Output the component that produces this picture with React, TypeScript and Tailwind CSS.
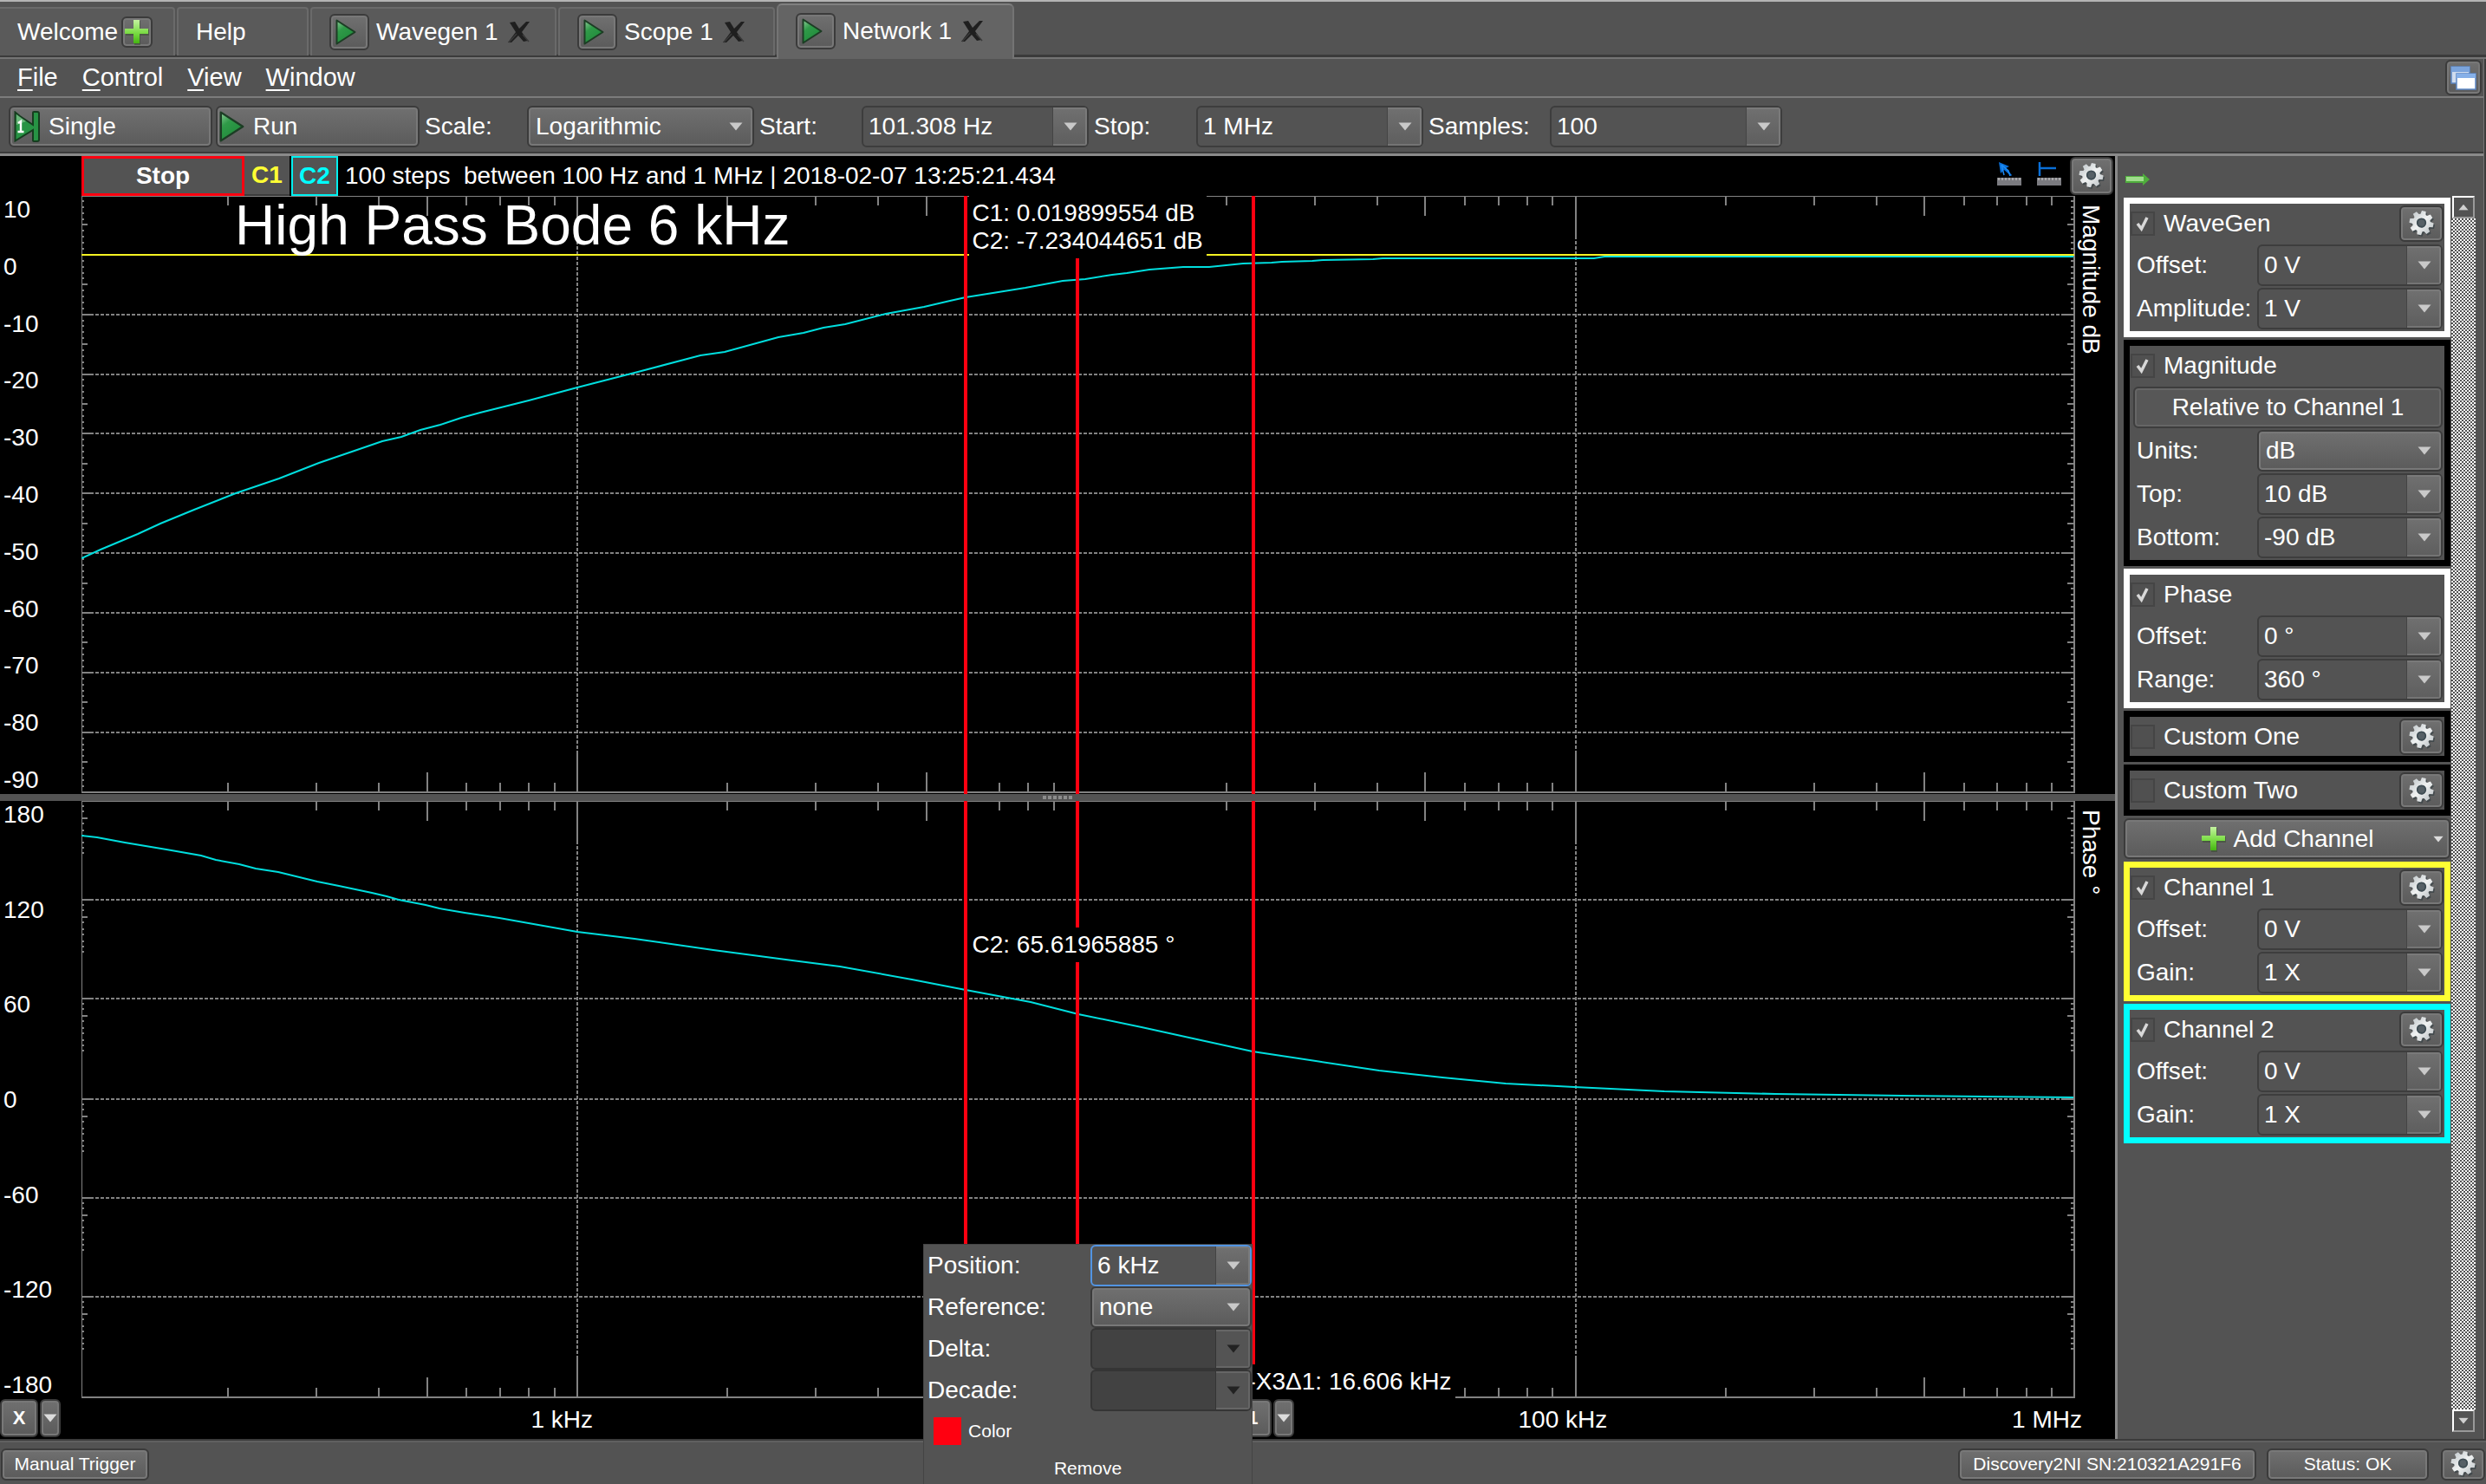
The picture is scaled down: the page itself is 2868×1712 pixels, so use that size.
import React, { useId } from "react";

/* ---------- shared looks ---------- */

const raised =
  "rounded-md border-2 border-[#3b3b3b] bg-linear-to-b from-[#707070] to-[#5b5b5b] shadow-[inset_0_0_0_2px_#787878]";

/* ---------- icons ---------- */

function PlayIcon({ className }: { className: string }) {
  return (
    <svg viewBox="0 0 24 32" preserveAspectRatio="none" className={className} aria-hidden="true">
      <defs>
        <linearGradient id="play" x1="0" y1="0" x2="0.6" y2="1">
          <stop offset="0" stopColor="#8fce9a" />
          <stop offset="0.4" stopColor="#2f9a48" />
          <stop offset="1" stopColor="#1f8a3a" />
        </linearGradient>
      </defs>
      <path d="M1.5 1.5 L22.5 16 L1.5 30.5 Z" fill="url(#play)" stroke="#1c3d24" strokeWidth="2" strokeLinejoin="round" />
    </svg>
  );
}

function SingleIcon() {
  return (
    <svg viewBox="0 0 30 36" className="h-9 w-[30px]" aria-hidden="true">
      <path
        d="M1.5 1.5 L7 6 L22 16 L22 2 Q22 1 23 1 H27 Q29 1 29 3 V33 Q29 35 27 35 H23 Q22 35 22 34 L22 22 L1.5 34.5 Z"
        fill="#279344"
        stroke="#163d1f"
        strokeWidth="2"
      />
      <path d="M3 4 L14 12 L3 16 Z" fill="#86c492" opacity="0.7" />
      <path d="M5 14 L8 12 V24 M4.5 24 H11.5" fill="none" stroke="#fff" strokeWidth="2.4" />
    </svg>
  );
}

function PlusIcon() {
  return (
    <svg viewBox="0 0 30 32" className="h-8 w-[30px]" aria-hidden="true">
      <defs>
        <linearGradient id="plus" x1="0" y1="0" x2="0" y2="1">
          <stop offset="0" stopColor="#c4f2a0" />
          <stop offset="0.55" stopColor="#7bdc45" />
          <stop offset="1" stopColor="#45b512" />
        </linearGradient>
      </defs>
      <path d="M12 3 H19 V13 H29 V20 H19 V31 H12 V20 H2 V13 H12 Z" fill="#2f4a22" opacity="0.45" />
      <path d="M11 2 H18 V12 H28 V18 H18 V29 H11 V18 H1 V12 H11 Z" fill="url(#plus)" />
    </svg>
  );
}

function CloseIcon() {
  return (
    <svg viewBox="0 0 28 26" className="h-[26px] w-7" aria-hidden="true">
      <path d="M3 2 L9 1 L14 9 L22 1 L26 1 L17 13 L24 23 L19 24 L13 17 L5 25 L1 25 L10 13 Z" fill="#1f1f1f" />
      <path d="M2 25 L11 15 M18 16 L25 24" stroke="#3a3a3a" strokeWidth="1.5" fill="none" />
    </svg>
  );
}

const gearPath = (() => {
  const points: string[] = [];
  const teeth = 8;
  for (let i = 0; i < teeth; i++) {
    const middle = (i * 2 * Math.PI) / teeth + 0.2;
    const corners: [number, number][] = [
      [-0.3, 11],
      [-0.17, 15],
      [0.17, 15],
      [0.3, 11],
    ];
    for (const [turn, radius] of corners) {
      points.push(`${(16 + radius * Math.cos(middle + turn)).toFixed(2)} ${(16 + radius * Math.sin(middle + turn)).toFixed(2)}`);
    }
  }
  return `M${points.join(" L")} Z M16 10.5 a5.5 5.5 0 1 0 0.01 0 Z`;
})();

function GearIcon() {
  return (
    <svg viewBox="0 0 33 34" className="h-8 w-8" aria-hidden="true">
      <defs>
        <linearGradient id="gear" x1="0" y1="0" x2="1" y2="1">
          <stop offset="0" stopColor="#b9c0c4" />
          <stop offset="0.5" stopColor="#f0f2f2" />
          <stop offset="1" stopColor="#b4bbbf" />
        </linearGradient>
      </defs>
      <path d={gearPath} transform="translate(1.5 2)" fill="#2f3a40" opacity="0.6" fillRule="evenodd" />
      <path d={gearPath} fill="url(#gear)" fillRule="evenodd" />
      <circle cx="16" cy="16" r="5" fill="#566066" stroke="#3f4d54" strokeWidth="2" />
    </svg>
  );
}

function WindowsIcon() {
  return (
    <svg viewBox="0 0 30 28" className="h-7 w-[30px]" aria-hidden="true">
      <rect x="1" y="1" width="21" height="19" fill="#cfdcee" stroke="#5c87c4" strokeWidth="1.5" />
      <rect x="1" y="1" width="21" height="6" fill="#7ba4dc" />
      <rect x="7" y="9" width="22" height="18" fill="#fff" stroke="#5c87c4" strokeWidth="1.5" />
      <rect x="7" y="9" width="22" height="5" fill="#86b0e8" />
    </svg>
  );
}

function RulerIcon({ mode }: { mode: "arrow" | "level" }) {
  return (
    <svg viewBox="0 0 28 28" className="h-7 w-7" aria-hidden="true">
      {mode === "arrow" ? (
        <>
          <path d="M2 0 L14 5 L10 7 L17 15 L16 16 L8 9 L4 13 Z" fill="#0a6fd8" />
          <path d="M5 3 L13 10 L15 16 M5 3 L8 15" stroke="#1d8cf5" strokeWidth="1.5" fill="none" />
        </>
      ) : (
        <path d="M3 0 V16 M3 7 H22" stroke="#0a6fd8" strokeWidth="2.5" fill="none" />
      )}
      <rect x="0" y="18" width="28" height="9" fill="#7b7b80" />
      <path d="M2 18 V21 M6 18 V21 M10 18 V21 M14 18 V21 M18 18 V21 M22 18 V21 M26 18 V21" stroke="#b8b8b8" strokeWidth="1.5" />
    </svg>
  );
}

function GreenArrowIcon() {
  return (
    <svg viewBox="0 0 30 16" className="h-4 w-[30px]" aria-hidden="true">
      <path d="M1 4 H21 V1 L29 8 L21 15 V12 H1 Z" fill="#4fae3c" />
      <path d="M2 5 H22 V10 H2 Z" fill="#9fdc8c" />
    </svg>
  );
}

function Chevron({ className = "fill-[#c9c9c9]" }: { className?: string }) {
  return (
    <svg viewBox="0 0 16 10" className={`h-[10px] w-4 ${className}`} aria-hidden="true">
      <path d="M0.5 0.5 H15.5 L8 9.5 Z" />
    </svg>
  );
}

/* ---------- controls ---------- */

function GearButton({ label, className = "h-[42px] w-[51px]" }: { label: string; className?: string }) {
  return (
    <button type="button" aria-label={label} className={`flex shrink-0 items-center justify-center ${raised} ${className}`}>
      <GearIcon />
    </button>
  );
}

function Combo({
  id,
  value,
  className,
  focused = false,
  disabled = false,
}: {
  id: string;
  value: string;
  className: string;
  focused?: boolean;
  disabled?: boolean;
}) {
  const frame = focused ? "border-[#5294e2] bg-[#535353]" : disabled ? "border-[#353535] bg-[#424242]" : "border-[#3d3d3d] bg-[#535353]";
  return (
    <div className={`flex h-12 shrink-0 overflow-hidden rounded-md border-2 ${frame} ${className}`}>
      <input id={id} defaultValue={value} disabled={disabled} className="min-w-0 flex-1 bg-transparent pl-1.5 text-[28px] leading-8 text-white outline-none" />
      <button
        type="button"
        aria-label="Choose a value"
        disabled={disabled}
        className={
          disabled
            ? "flex w-10 shrink-0 items-center justify-center border-l border-[#353535] bg-[#545454] shadow-[inset_-2px_0_0_#666,inset_0_2px_0_#666,inset_0_-2px_0_#666]"
            : "flex w-10 shrink-0 items-center justify-center border-l border-[#444] bg-linear-to-b from-[#707070] to-[#5e5e5e] shadow-[inset_-2px_0_0_#7a7a7a,inset_0_2px_0_#7a7a7a,inset_0_-2px_0_#747474]"
        }
      >
        <Chevron className={disabled ? "fill-[#222]" : "fill-[#c9c9c9]"} />
      </button>
    </div>
  );
}

function Select({ id, value, className }: { id: string; value: string; className: string }) {
  return (
    <div className={`relative h-12 shrink-0 ${className}`}>
      <select id={id} defaultValue={value} className={`h-full w-full appearance-none pl-2 text-[28px] leading-8 text-white ${raised}`}>
        <option>{value}</option>
      </select>
      <span className="pointer-events-none absolute inset-y-0 right-0 flex w-[42px] items-center justify-center">
        <Chevron />
      </span>
    </div>
  );
}

/* ---------- window tabs ---------- */

function ToolTab({ name, active = false, className }: { name: string; active?: boolean; className: string }) {
  return (
    <div
      className={`flex items-center ${
        active
          ? "h-16 rounded-t-md border-x-2 border-t-2 border-x-[#747474] border-t-[#808080] bg-[#646464] pb-0.5"
          : "h-14 rounded-t-sm border-x-2 border-t-2 border-x-[#6a6a6a] border-t-[#6a6a6a] bg-[#5a5a5a]"
      } ${className}`}
    >
      <button type="button" aria-label={`Run ${name}`} className={`flex h-[42px] w-[46px] items-center justify-center pr-2 ${raised}`}>
        <PlayIcon className="h-[30px] w-6" />
      </button>
      <span className="ml-2 whitespace-nowrap">{name}</span>
      <button type="button" aria-label={`Close ${name}`} className="ml-2.5">
        <CloseIcon />
      </button>
    </div>
  );
}

function Tabs() {
  return (
    <nav className="flex h-[68px] items-end gap-0.5 border-t-2 border-[#b4b4b4] bg-[#535353] shadow-[inset_0_-2px_0_#747474,inset_0_-5px_0_#3b3b3b]">
      <div className="mb-1 flex h-14 w-[202px] items-center gap-1 rounded-tr-sm border-t-2 border-r-2 border-[#6a6a6a] bg-[#5a5a5a] pl-5">
        <span>Welcome</span>
        <button type="button" aria-label="New instrument" className={`flex h-9 w-9 items-center justify-center ${raised}`}>
          <PlusIcon />
        </button>
      </div>
      <button type="button" className="mb-1 h-14 w-[152px] rounded-t-sm border-x-2 border-t-2 border-[#6a6a6a] bg-[#5a5a5a] pl-5 text-left">
        Help
      </button>
      <ToolTab name="Wavegen 1" className="mb-1 w-[284px] pl-5" />
      <ToolTab name="Scope 1" className="mb-1 w-[250px] pl-5" />
      <ToolTab name="Network 1" active className="w-[274px] pl-5" />
    </nav>
  );
}

function MenuBar() {
  return (
    <div className="flex h-[45px] items-center justify-between border-b-2 border-[#7c7c7c]">
      <div className="flex gap-7 pb-0.5 pl-5 text-[29px] leading-8">
        {["File", "Control", "View", "Window"].map((name) => (
          <button type="button" key={name}>
            <span className="underline decoration-2 underline-offset-4">{name[0]}</span>
            {name.slice(1)}
          </button>
        ))}
      </div>
      <button type="button" aria-label="Dock windows" className={`mr-0.5 flex h-[41px] w-[42px] items-center justify-center ${raised}`}>
        <WindowsIcon />
      </button>
    </div>
  );
}

function Toolbar() {
  return (
    <div className="flex h-[67px] items-center border-b-3 border-[#8a8a8a] pt-0.5 pl-2.5 shadow-[inset_0_-2px_0_#3b3b3b]">
      <button type="button" className={`flex h-12 w-[235px] items-center gap-2.5 pl-1 ${raised}`}>
        <SingleIcon />
        Single
      </button>
      <button type="button" className={`ml-1 flex h-12 w-[235px] items-center gap-2.5 pl-0.5 ${raised}`}>
        <PlayIcon className="h-9 w-[29px]" />
        Run
      </button>
      <label htmlFor="scale" className="w-[124px] pl-1.5">
        Scale:
      </label>
      <Select id="scale" value="Logarithmic" className="w-[262px]" />
      <label htmlFor="start" className="w-[124px] pl-1.5">
        Start:
      </label>
      <Combo id="start" value="101.308 Hz" className="w-[262px]" />
      <label htmlFor="stop" className="w-[124px] pl-1.5">
        Stop:
      </label>
      <Combo id="stop" value="1 MHz" className="w-[262px]" />
      <label htmlFor="samples" className="w-[146px] pl-1.5">
        Samples:
      </label>
      <Combo id="samples" value="100" className="w-[268px]" />
    </div>
  );
}

/* ---------- plots ---------- */

const WIDTH = 2300;
const HEIGHT = 690;

const freqX = (hz: number) => Math.round(572 + 575.9 * Math.log10(hz / 1000));

const minorFrequencies: { x: number; long: boolean }[] = [];
for (const decade of [100, 1000, 10000, 100000]) {
  for (let n = 2; n <= 9; n++) minorFrequencies.push({ x: freqX(n * decade), long: n === 5 });
}
const decades = [1000, 10000, 100000].map(freqX);
const cursors = [6000, 10060, 22606].map(freqX);

type Row = { y: number; size: "major" | "half" | "small" };

const magnitudeRows: Row[] = [];
for (let i = 1; i < 100; i++) {
  const y = Math.round(-1 + i * 6.886);
  magnitudeRows.push({ y, size: i % 10 === 0 ? "major" : i % 5 === 0 ? "half" : "small" });
}

const phaseRows: Row[] = [];
for (const base of [0, 114, 228, 344, 458, 572]) {
  if (base > 0) phaseRows.push({ y: base, size: "major" });
  for (const step of [6, 12, 20, 26, 34, 40, 48, 54, 60]) {
    phaseRows.push({ y: base + step, size: step === 20 ? "half" : "small" });
  }
}

const tickLength = { major: 14, half: 7, small: 3 };

const magnitudeCurve =
  "0,418 22,408 65,390 91,378 130,362 178,343 228,326 274,308 315,294 347,283 369,278 391,270 414,264 438,256 460,250 516,236 572,221 642,203 714,184 742,180 804,163 833,158 856,152 881,148 928,136 972,128 1002,121 1020,117 1089,106 1132,98 1158,96 1189,91 1206,89 1232,85 1271,82 1301,82 1340,78 1373,77 1385,76 1420,75 1432,74 1490,73 1501,72 1745,72 1757,70 2298,70";

const phaseCurve =
  "0,40 18,42 50,48 98,56 138,63 155,68 182,73 201,78 227,82 272,93 297,98 335,106 352,110 366,114 397,120 413,124 442,129 482,135 544,146 572,151 638,159 729,172 820,184 875,191 958,206 1020,218 1095,232 1150,246 1223,261 1296,277 1351,289 1424,300 1497,311 1570,319 1643,326 1722,330 1826,335 1954,338 2100,340 2298,342";

function Plot({ rows, curve, reference }: { rows: Row[]; curve: string; reference?: number }) {
  return (
    <svg viewBox={`0 0 ${WIDTH} ${HEIGHT}`} preserveAspectRatio="none" className="absolute inset-0 h-full w-full" aria-hidden="true">
      <g stroke="#828282" strokeWidth="2" shapeRendering="crispEdges">
        <path d={`M0 0.5 H${WIDTH - 1}`} strokeWidth="1" />
        <path d={`M0.5 0 V${HEIGHT - 2}`} strokeWidth="1" />
        <path d={`M0 ${HEIGHT - 2} H${WIDTH} M${WIDTH - 1} 0 V${HEIGHT - 1}`} />
        {minorFrequencies.map(({ x, long }) => (
          <path key={x} d={`M${x} 1 v${long ? 22 : 10} M${x} ${HEIGHT - 3} v${long ? -22 : -10}`} />
        ))}
        {decades.map((x) => (
          <g key={x}>
            <path d={`M${x} 1 v49 M${x} ${HEIGHT - 3} v-46`} />
            <path d={`M${x} 52 V${HEIGHT - 49}`} strokeDasharray="4 2" />
          </g>
        ))}
        {rows.map(({ y, size }) => (
          <path key={y} d={`M0 ${y} h${tickLength[size]} M${WIDTH - 2} ${y} h-${tickLength[size]}`} />
        ))}
        {rows
          .filter(({ size }) => size === "major")
          .map(({ y }) => (
            <path key={y} d={`M16 ${y} H${WIDTH - 16}`} strokeDasharray="4 2" />
          ))}
      </g>
      <polyline points={curve} fill="none" stroke="#00dede" strokeWidth="2" />
      {reference !== undefined && <path d={`M0 ${reference} H${WIDTH - 1}`} stroke="#f4f222" strokeWidth="2" shapeRendering="crispEdges" />}
      {cursors.map((x) => (
        <path key={x} d={`M${x} 0 V${HEIGHT}`} stroke="#ff0010" strokeWidth="4" shapeRendering="crispEdges" />
      ))}
    </svg>
  );
}

function PlotRow({ labels, title, children }: { labels: string[]; title: string; children: React.ReactNode }) {
  return (
    <div className="flex min-h-[690px] flex-1">
      <div className="flex w-[94px] shrink-0 flex-col justify-between pl-1">
        {labels.map((text) => (
          <span key={text}>{text}</span>
        ))}
      </div>
      <div className="relative min-w-0 flex-1">{children}</div>
      <div className="flex w-[46px] shrink-0 justify-start pt-2.5 pl-0.5">
        <span className="[writing-mode:vertical-rl]">{title}</span>
      </div>
    </div>
  );
}

function AxisButtons({ text, className }: { text: string; className: string }) {
  return (
    <div className={`flex h-11 gap-0.5 ${className}`}>
      <button type="button" className={`w-11 text-[22px] font-bold ${raised}`}>
        {text}
      </button>
      <button type="button" aria-label="Cursor options" className={`flex w-6 items-center justify-center ${raised}`}>
        <Chevron className="fill-[#dcdcdc]" />
      </button>
    </div>
  );
}

function PlotPane() {
  return (
    <section className="flex min-w-0 flex-1 flex-col bg-black">
      <header className="flex h-[46px] items-center pl-[94px]">
        <button type="button" className="h-full w-[188px] border-3 border-[#ff0010] bg-[#535353] font-bold">
          Stop
        </button>
        <button type="button" className="h-full w-[52px] border-b-2 border-[#3b3b3b] bg-[#535353] font-bold text-[#ffff33]">
          C1
        </button>
        <button type="button" className="ml-0.5 h-full w-[54px] border-2 border-[#00f0f0] bg-[#535353] font-bold text-[#00ffff]">
          C2
        </button>
        <p className="ml-2 flex-1 whitespace-pre">100 steps  between 100 Hz and 1 MHz | 2018-02-07 13:25:21.434</p>
        <div className="flex items-center gap-[18px] pr-2.5 pb-1">
          <button type="button" aria-label="Free measurement">
            <RulerIcon mode="arrow" />
          </button>
          <button type="button" aria-label="Level measurement">
            <RulerIcon mode="level" />
          </button>
        </div>
        <GearButton label="Plot settings" className="mr-0.5 h-11 w-[50px]" />
      </header>

      <PlotRow title="Magnitude dB" labels={["10", "0", "-10", "-20", "-30", "-40", "-50", "-60", "-70", "-80", "-90"]}>
        <Plot rows={magnitudeRows} curve={magnitudeCurve} reference={68} />
        <h1 className="absolute top-0 left-[7.7%] text-[64px] leading-[68px] whitespace-nowrap">High Pass Bode 6 kHz</h1>
        <div className="absolute top-0 left-[44.5%] bg-black px-1 py-1 whitespace-nowrap">
          <p>C1: 0.019899554 dB</p>
          <p>C2: -7.234044651 dB</p>
        </div>
      </PlotRow>

      <div className="flex h-2 items-center justify-center gap-0.5 bg-[#535353]">
        {[0, 1, 2, 3, 4, 5].map((n) => (
          <span key={n} className="h-1 w-1 bg-[#8c8c8c]" />
        ))}
      </div>

      <PlotRow title="Phase °" labels={["180", "120", "60", "0", "-60", "-120", "-180"]}>
        <Plot rows={phaseRows} curve={phaseCurve} />
        <p className="absolute top-[146px] left-[44.5%] bg-black px-1 py-1 whitespace-nowrap">C2: 65.61965885 °</p>
        <p className="absolute bottom-0 left-[58.5%] bg-black py-1 pr-1 whitespace-nowrap">-X3Δ1: 16.606 kHz</p>
      </PlotRow>

      <div className="flex h-[46px] items-start">
        <AxisButtons text="X" className="w-[94px]" />
        <div className="relative flex-1 self-stretch">
          <span className="absolute top-2 left-[24.1%] -translate-x-1/2">1 kHz</span>
          <AxisButtons text="1" className="absolute top-0 left-[57.8%]" />
          <span className="absolute top-2 left-[74.3%] -translate-x-1/2">100 kHz</span>
          <span className="absolute top-2 -right-2">1 MHz</span>
        </div>
        <div className="w-[46px]" />
      </div>
    </section>
  );
}

/* ---------- cursor popup ---------- */

function CursorPopup() {
  return (
    <form className="absolute bottom-0 left-[37.17%] z-10 h-[276px] w-[378px] bg-[#535353] shadow-[0_0_0_1px_#444]">
      <div className="flex items-center justify-between pl-1">
        <label htmlFor="position">Position:</label>
        <Combo id="position" value="6 kHz" focused className="w-[186px]" />
      </div>
      <div className="flex items-center justify-between pl-1">
        <label htmlFor="reference">Reference:</label>
        <Select id="reference" value="none" className="w-[186px]" />
      </div>
      <div className="flex items-center justify-between pl-1">
        <label htmlFor="delta">Delta:</label>
        <Combo id="delta" value="" disabled className="w-[186px]" />
      </div>
      <div className="flex items-center justify-between pl-1">
        <label htmlFor="decade">Decade:</label>
        <Combo id="decade" value="" disabled className="w-[186px]" />
      </div>
      <button type="button" className="flex h-[46px] items-center gap-2 pl-[11px] text-[21px]">
        <span className="h-8 w-8 bg-[#ff0010]" />
        Color
      </button>
      <button type="button" className="h-10 w-full text-[21px]">
        Remove
      </button>
    </form>
  );
}

/* ---------- side panel ---------- */

type Field = { label: string; value: string; kind?: "select" };

function Group({
  name,
  frame,
  checked = true,
  gear = false,
  action,
  fields = [],
}: {
  name: string;
  frame: string;
  checked?: boolean;
  gear?: boolean;
  action?: string;
  fields?: Field[];
}) {
  const id = useId();
  return (
    <fieldset className={`border-[7px] bg-[#535353] ${frame}`}>
      <div className="flex h-[45px] items-center pr-px pl-px">
        <input
          id={id}
          type="checkbox"
          defaultChecked={checked}
          className="peer h-7 w-7 shrink-0 appearance-none border-2 border-[#454545] bg-[#505050]"
        />
        <svg viewBox="0 0 28 28" className="pointer-events-none -ml-7 h-7 w-7 opacity-0 peer-checked:opacity-100" aria-hidden="true">
          <path d="M8 14 L12.5 20 L19 7" fill="none" stroke="#d8d8d8" strokeWidth="3.5" />
        </svg>
        <label htmlFor={id} className="ml-2.5 flex-1">
          {name}
        </label>
        {gear && <GearButton label={`${name} settings`} />}
      </div>
      {(action || fields.length > 0) && (
        <div className="flex flex-col gap-0.5 py-0.5 pr-0.5 pl-1">
          {action && (
            <button type="button" className="h-12 rounded-md border-2 border-[#3d3d3d] bg-[#575757] shadow-[inset_0_0_0_2px_#666]">
              {action}
            </button>
          )}
          {fields.map(({ label, value, kind }) => (
            <div key={label} className="flex items-center justify-between pl-1">
              <label htmlFor={id + label}>{label}</label>
              {kind === "select" ? (
                <Select id={id + label} value={value} className="w-[214px]" />
              ) : (
                <Combo id={id + label} value={value} className="w-[214px]" />
              )}
            </div>
          ))}
        </div>
      )}
    </fieldset>
  );
}

function ScrollBar() {
  const end = "flex h-[26px] w-[26px] items-center justify-center border-2 border-t-white border-r-[#999] border-b-[#999] border-l-white bg-[#535353]";
  return (
    <div className="flex w-7 shrink-0 flex-col items-center">
      <button type="button" aria-label="Scroll up" className={end}>
        <Chevron className="rotate-180 scale-75 fill-[#d0d0d0]" />
      </button>
      <div className="w-full flex-1 bg-[conic-gradient(#fff_25%,#535353_0_50%,#fff_0_75%,#535353_0)] bg-[length:4px_4px]" />
      <button type="button" aria-label="Scroll down" className={end}>
        <Chevron className="scale-75 fill-[#d0d0d0]" />
      </button>
    </div>
  );
}

function SidePanel() {
  return (
    <aside className="flex w-[425px] shrink-0 flex-col border-l-3 border-[#8a8a8a] bg-[#535353] pb-2">
      <div className="flex h-[46px] items-center pt-6 pb-4 pl-2">
        <button type="button" aria-label="Hide panel">
          <GreenArrowIcon />
        </button>
      </div>
      <div className="flex flex-1 pl-[7px]">
        <div className="mr-px flex w-[377px] flex-col gap-[3px] pt-0.5">
          <Group
            name="WaveGen"
            frame="border-white"
            gear
            fields={[
              { label: "Offset:", value: "0 V" },
              { label: "Amplitude:", value: "1 V" },
            ]}
          />
          <Group
            name="Magnitude"
            frame="border-black"
            action="Relative to Channel 1"
            fields={[
              { label: "Units:", value: "dB", kind: "select" },
              { label: "Top:", value: "10 dB" },
              { label: "Bottom:", value: "-90 dB" },
            ]}
          />
          <Group
            name="Phase"
            frame="border-white"
            fields={[
              { label: "Offset:", value: "0 °" },
              { label: "Range:", value: "360 °" },
            ]}
          />
          <Group name="Custom One" frame="border-black" checked={false} gear />
          <Group name="Custom Two" frame="border-black" checked={false} gear />
          <button type="button" className={`flex h-[47px] items-center pr-1 pl-2 ${raised}`}>
            <span className="flex flex-1 items-center justify-center gap-2">
              <PlusIcon />
              Add Channel
            </span>
            <Chevron className="-ml-3 scale-75 fill-[#dcdcdc]" />
          </button>
          <Group
            name="Channel 1"
            frame="border-[#ffff33]"
            gear
            fields={[
              { label: "Offset:", value: "0 V" },
              { label: "Gain:", value: "1 X" },
            ]}
          />
          <Group
            name="Channel 2"
            frame="border-[#00ffff]"
            gear
            fields={[
              { label: "Offset:", value: "0 V" },
              { label: "Gain:", value: "1 X" },
            ]}
          />
        </div>
        <ScrollBar />
      </div>
    </aside>
  );
}

function StatusBar() {
  return (
    <footer className="flex h-[52px] items-center border-t-2 border-[#3b3b3b] px-px pt-1 text-[21px] shadow-[inset_0_2px_0_#606060]">
      <button type="button" className={`h-[37px] w-[171px] ${raised}`}>
        Manual Trigger
      </button>
      <div className="flex-1" />
      <button type="button" className={`mr-3 h-[37px] w-[344px] ${raised}`}>
        Discovery2NI SN:210321A291F6
      </button>
      <button type="button" className={`mr-3.5 h-[37px] w-[187px] ${raised}`}>
        Status: OK
      </button>
      <GearButton label="Device settings" className="h-[37px] w-[51px]" />
    </footer>
  );
}

export default function App() {
  return (
    <div className="relative flex min-h-screen flex-col overflow-hidden bg-[#535353] font-['Liberation_Sans',Arial,sans-serif] text-[28px] leading-8 text-white">
      <Tabs />
      <div className="flex flex-1 flex-col border-r-2 border-[#3b3b3b]">
        <div className="flex flex-1 flex-col border-r border-[#747474]">
          <MenuBar />
          <Toolbar />
          <main className="flex flex-1">
            <PlotPane />
            <SidePanel />
          </main>
        </div>
      </div>
      <StatusBar />
      <CursorPopup />
    </div>
  );
}
